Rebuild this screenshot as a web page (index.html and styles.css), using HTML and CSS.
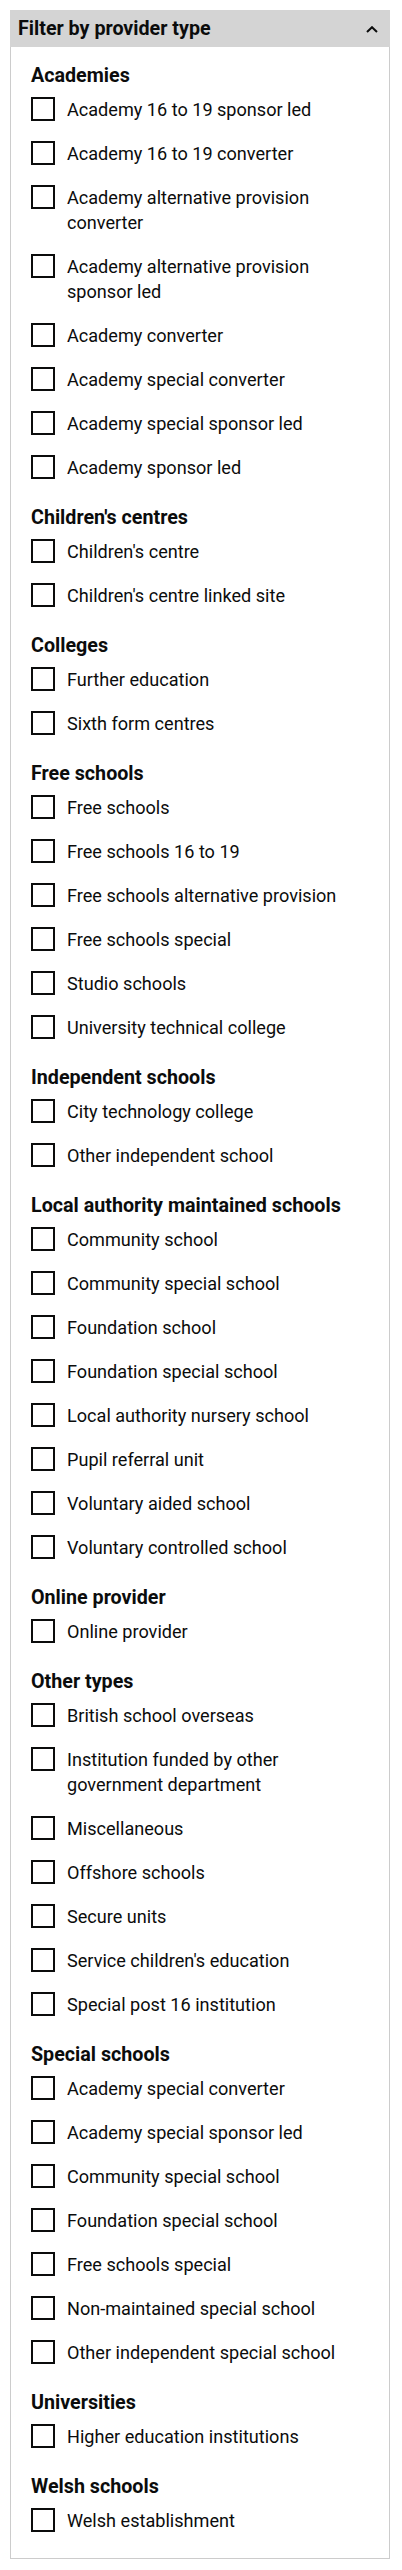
FILE: index.html
```html
<!DOCTYPE html>
<html lang="en">
<head>
<meta charset="utf-8">
<title>Filter by provider type</title>
<link rel="stylesheet" href="styles.css">
</head>
<body>
<div class="panel">
  <div class="panel-header">
    <span class="panel-title">Filter by provider type</span>
    <svg class="chevron" width="12" height="7" viewBox="0 0 12 7"><polyline points="1,6 6,1.2 11,6" fill="none" stroke="#0b0c0c" stroke-width="2"/></svg>
  </div>
  <div class="panel-body">
    <div class="group">
      <div class="group-title">Academies</div>
      <label class="item"><span class="box"></span><span class="label">Academy 16 to 19 sponsor led</span></label>
      <label class="item"><span class="box"></span><span class="label">Academy 16 to 19 converter</span></label>
      <label class="item"><span class="box"></span><span class="label">Academy alternative provision converter</span></label>
      <label class="item"><span class="box"></span><span class="label">Academy alternative provision sponsor led</span></label>
      <label class="item"><span class="box"></span><span class="label">Academy converter</span></label>
      <label class="item"><span class="box"></span><span class="label">Academy special converter</span></label>
      <label class="item"><span class="box"></span><span class="label">Academy special sponsor led</span></label>
      <label class="item"><span class="box"></span><span class="label">Academy sponsor led</span></label>
    </div>
    <div class="group">
      <div class="group-title">Children's centres</div>
      <label class="item"><span class="box"></span><span class="label">Children's centre</span></label>
      <label class="item"><span class="box"></span><span class="label">Children's centre linked site</span></label>
    </div>
    <div class="group">
      <div class="group-title">Colleges</div>
      <label class="item"><span class="box"></span><span class="label">Further education</span></label>
      <label class="item"><span class="box"></span><span class="label">Sixth form centres</span></label>
    </div>
    <div class="group">
      <div class="group-title">Free schools</div>
      <label class="item"><span class="box"></span><span class="label">Free schools</span></label>
      <label class="item"><span class="box"></span><span class="label">Free schools 16 to 19</span></label>
      <label class="item"><span class="box"></span><span class="label">Free schools alternative provision</span></label>
      <label class="item"><span class="box"></span><span class="label">Free schools special</span></label>
      <label class="item"><span class="box"></span><span class="label">Studio schools</span></label>
      <label class="item"><span class="box"></span><span class="label">University technical college</span></label>
    </div>
    <div class="group">
      <div class="group-title">Independent schools</div>
      <label class="item"><span class="box"></span><span class="label">City technology college</span></label>
      <label class="item"><span class="box"></span><span class="label">Other independent school</span></label>
    </div>
    <div class="group">
      <div class="group-title">Local authority maintained schools</div>
      <label class="item"><span class="box"></span><span class="label">Community school</span></label>
      <label class="item"><span class="box"></span><span class="label">Community special school</span></label>
      <label class="item"><span class="box"></span><span class="label">Foundation school</span></label>
      <label class="item"><span class="box"></span><span class="label">Foundation special school</span></label>
      <label class="item"><span class="box"></span><span class="label">Local authority nursery school</span></label>
      <label class="item"><span class="box"></span><span class="label">Pupil referral unit</span></label>
      <label class="item"><span class="box"></span><span class="label">Voluntary aided school</span></label>
      <label class="item"><span class="box"></span><span class="label">Voluntary controlled school</span></label>
    </div>
    <div class="group">
      <div class="group-title">Online provider</div>
      <label class="item"><span class="box"></span><span class="label">Online provider</span></label>
    </div>
    <div class="group">
      <div class="group-title">Other types</div>
      <label class="item"><span class="box"></span><span class="label">British school overseas</span></label>
      <label class="item"><span class="box"></span><span class="label">Institution funded by other government department</span></label>
      <label class="item"><span class="box"></span><span class="label">Miscellaneous</span></label>
      <label class="item"><span class="box"></span><span class="label">Offshore schools</span></label>
      <label class="item"><span class="box"></span><span class="label">Secure units</span></label>
      <label class="item"><span class="box"></span><span class="label">Service children's education</span></label>
      <label class="item"><span class="box"></span><span class="label">Special post 16 institution</span></label>
    </div>
    <div class="group">
      <div class="group-title">Special schools</div>
      <label class="item"><span class="box"></span><span class="label">Academy special converter</span></label>
      <label class="item"><span class="box"></span><span class="label">Academy special sponsor led</span></label>
      <label class="item"><span class="box"></span><span class="label">Community special school</span></label>
      <label class="item"><span class="box"></span><span class="label">Foundation special school</span></label>
      <label class="item"><span class="box"></span><span class="label">Free schools special</span></label>
      <label class="item"><span class="box"></span><span class="label">Non-maintained special school</span></label>
      <label class="item"><span class="box"></span><span class="label">Other independent special school</span></label>
    </div>
    <div class="group">
      <div class="group-title">Universities</div>
      <label class="item"><span class="box"></span><span class="label">Higher education institutions</span></label>
    </div>
    <div class="group">
      <div class="group-title">Welsh schools</div>
      <label class="item"><span class="box"></span><span class="label">Welsh establishment</span></label>
    </div>
  </div>
</div>
</body>
</html>
```
FILE: styles.css
```css
html, body {
  margin: 0;
  padding: 0;
  background: #ffffff;
}
body {
  font-family: Roboto, "Liberation Sans", Arial, sans-serif;
  color: #0b0c0c;
}
.panel {
  margin: 10px;
  width: 380px;
}
.panel-header {
  height: 37px;
  box-sizing: border-box;
  background: #d4d4d4;
  padding: 6px 12px 6px 8px;
  display: flex;
  align-items: center;
  justify-content: space-between;
}
.panel-title {
  font-size: 19.7px;
  font-weight: 700;
  line-height: 25px;
}
.chevron {
  display: block;
  margin-top: 1px;
}
.panel-body {
  border: 1px solid #cccccc;
  border-top: 0;
  padding: 16px 20px 0 20px;
}
.group {
  margin-bottom: 6px;
}
.group-title {
  font-size: 19.7px;
  font-weight: 700;
  line-height: 25px;
  margin-bottom: 9px;
}
.item {
  display: flex;
  align-items: flex-start;
  padding-bottom: 19px;
}
.box {
  flex: 0 0 auto;
  width: 24px;
  height: 24px;
  box-sizing: border-box;
  border: 2px solid #0b0c0c;
  background: #ffffff;
}
.label {
  font-size: 18.1px;
  line-height: 25px;
  padding: 0 15px 0 12px;
}
```
